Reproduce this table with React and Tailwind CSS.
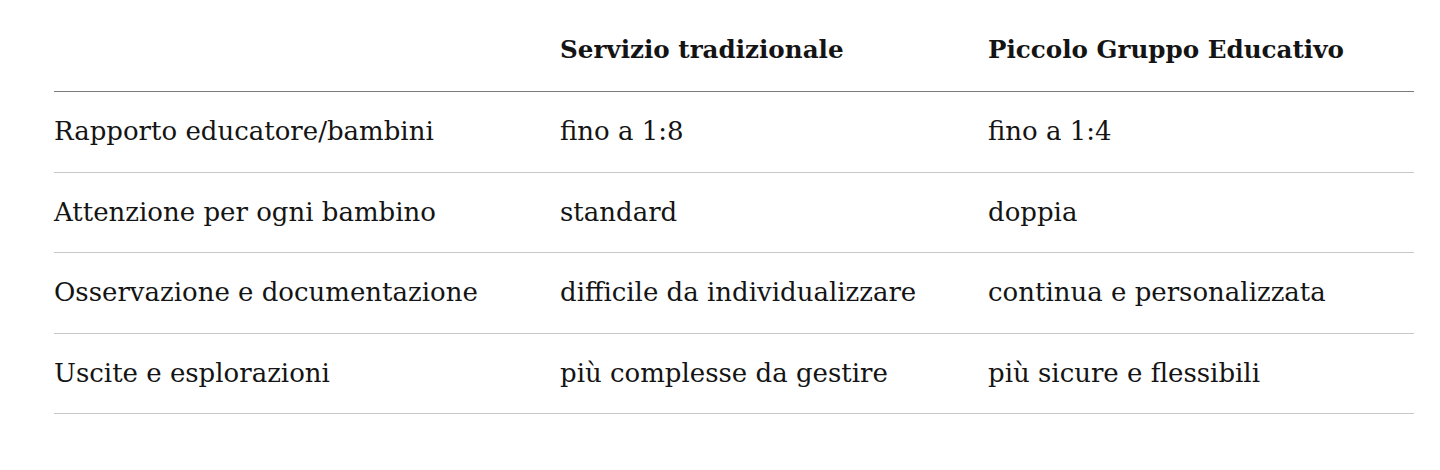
import React from 'react';

const rows = [
  ['Rapporto educatore/bambini', 'fino a 1:8', 'fino a 1:4'],
  ['Attenzione per ogni bambino', 'standard', 'doppia'],
  ['Osservazione e documentazione', 'difficile da individualizzare', 'continua e personalizzata'],
  ['Uscite e esplorazioni', 'più complesse da gestire', 'più sicure e flessibili'],
];

export default function App() {
  return (
    <div className="w-[1440px] h-[470px] bg-white pl-[54px] pr-[26px] pt-[12px] text-[#141414] text-[26px] font-['DejaVu_Serif',serif]">
      <div className="grid grid-cols-[506px_428px_1fr] h-[80px] items-center border-b border-[#7a7a7a] font-bold text-[24.6px] pb-[2px]">
        <div></div>
        <div>Servizio tradizionale</div>
        <div>Piccolo Gruppo Educativo</div>
      </div>
      {rows.map((r) => (
        <div key={r[0]} className="grid grid-cols-[506px_428px_1fr] h-[80.5px] items-center border-b border-[#c8c8c8]">
          <div>{r[0]}</div>
          <div>{r[1]}</div>
          <div>{r[2]}</div>
        </div>
      ))}
    </div>
  );
}
